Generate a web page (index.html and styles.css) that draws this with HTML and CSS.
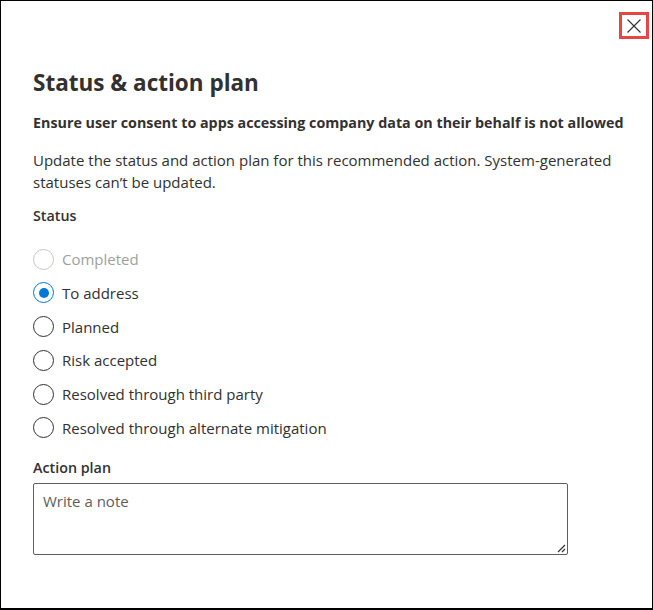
FILE: index.html
```html
<!DOCTYPE html>
<html>
<head>
<meta charset="utf-8">
<link rel="stylesheet" href="styles.css">
</head>
<body>
<div class="panel">
  <div class="topbar">
    <button class="close" aria-label="Close">
      <svg width="16" height="16" viewBox="0 0 16 16"><path d="M1.5 1.5 L14.5 14.5 M14.5 1.5 L1.5 14.5" stroke="#323130" stroke-width="1.1" fill="none"/></svg>
    </button>
  </div>
  <h1 class="title">Status &amp; action plan</h1>
  <p class="subtitle">Ensure user consent to apps accessing company data on their behalf is not allowed</p>
  <p class="desc">Update the status and action plan for this recommended action. System-generated statuses can’t be updated.</p>
  <div class="label">Status</div>
  <div class="radios">
    <div class="radio disabled"><span class="circle"></span><span>Completed</span></div>
    <div class="radio checked"><span class="circle"></span><span>To address</span></div>
    <div class="radio"><span class="circle"></span><span>Planned</span></div>
    <div class="radio"><span class="circle"></span><span>Risk accepted</span></div>
    <div class="radio"><span class="circle"></span><span>Resolved through third party</span></div>
    <div class="radio"><span class="circle"></span><span>Resolved through alternate mitigation</span></div>
  </div>
  <div class="label plan">Action plan</div>
  <div class="textarea">
    <span class="placeholder">Write a note</span>
    <svg class="grip" width="12" height="12" viewBox="0 0 12 12"><path d="M11 4 L4 11 M11 8 L8 11" stroke="#323130" stroke-width="1.2" fill="none"/></svg>
  </div>
</div>
</body>
</html>
```
FILE: styles.css
```css
html, body {
  margin: 0;
  padding: 0;
}
body {
  width: 653px;
  height: 610px;
  box-sizing: border-box;
  border: 1px solid #000;
  border-bottom-width: 2px;
  background: #fff;
  font-family: "Open Sans", "Noto Sans", sans-serif;
  color: #323130;
  overflow: hidden;
}
.panel {
  padding: 0 0 0 32px;
  display: flex;
  flex-direction: column;
  position: relative;
}
.topbar {
  height: 64px;
}
.close {
  position: absolute;
  top: 11px;
  right: 3px;
  width: 30px;
  height: 27px;
  box-sizing: border-box;
  border: 3px solid #e84545;
  background: #fff;
  padding: 0;
  display: flex;
  align-items: center;
  justify-content: center;
}
.title {
  margin: 0;
  font-size: 22.5px;
  font-weight: 700;
  line-height: 36px;
}
.subtitle {
  margin: 12px 0 0;
  font-size: 14.3px;
  font-weight: 700;
  line-height: 20px;
}
.desc {
  margin: 16px 0 0;
  font-size: 15px;
  line-height: 22px;
  width: 600px;
}
.label {
  margin-top: 13px;
  font-size: 14.3px;
  font-weight: 600;
  line-height: 20px;
}
.radios {
  margin-top: 22px;
  display: flex;
  flex-direction: column;
  gap: 11.8px;
}
.radio {
  display: flex;
  align-items: center;
  gap: 8px;
  font-size: 15px;
  line-height: 22px;
}
.circle {
  width: 21px;
  height: 21px;
  box-sizing: border-box;
  border: 1px solid #323130;
  border-radius: 50%;
  position: relative;
  flex: none;
}
.disabled { color: #a19f9d; }
.disabled .circle { border-color: #c8c6c4; }
.checked .circle { border-color: #0078d4; }
.checked .circle::after {
  content: "";
  position: absolute;
  left: 4.5px;
  top: 4.5px;
  width: 10px;
  height: 10px;
  border-radius: 50%;
  background: #0078d4;
}
.plan { margin-top: 19px; }
.textarea {
  margin-top: 5px;
  width: 535px;
  height: 72px;
  box-sizing: border-box;
  border: 1px solid #605e5c;
  border-radius: 2px;
  padding: 7px 9px;
  font-size: 15px;
  line-height: 20px;
  color: #605e5c;
  position: relative;
}
.grip {
  position: absolute;
  right: 1px;
  bottom: 1px;
}
```
